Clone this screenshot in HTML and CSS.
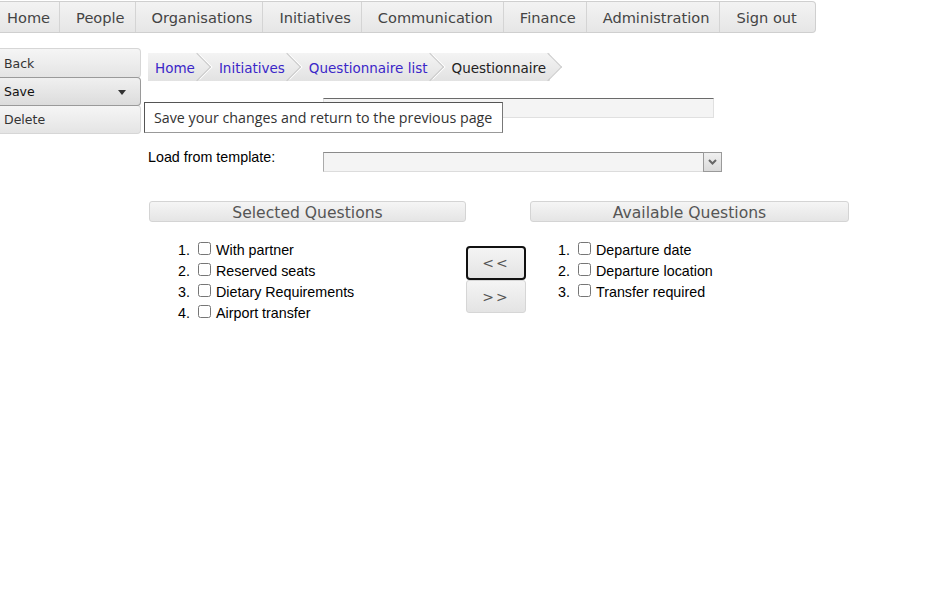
FILE: index.html
```html
<!DOCTYPE html>
<html>
<head>
<meta charset="utf-8">
<link rel="stylesheet" href="styles.css">
</head>
<body>
<nav class="topnav">
  <a class="nav-item first">Home</a>
  <a class="nav-item">People</a>
  <a class="nav-item">Organisations</a>
  <a class="nav-item">Initiatives</a>
  <a class="nav-item">Communication</a>
  <a class="nav-item">Finance</a>
  <a class="nav-item">Administration</a>
  <a class="nav-item last">Sign out</a>
</nav>
<div class="main">
  <aside class="sidemenu">
    <div class="side-btn first">Back</div>
    <div class="side-btn active">Save <span class="caret"></span></div>
    <div class="side-btn">Delete</div>
    <div class="tooltip">Save your changes and return to the previous page</div>
  </aside>
  <section class="content">
    <ul class="crumbs">
      <li class="crumb"><a class="crumb-text">Home</a></li>
      <li class="crumb"><a class="crumb-text">Initiatives</a></li>
      <li class="crumb"><a class="crumb-text">Questionnaire list</a></li>
      <li class="crumb current"><span class="crumb-text">Questionnaire</span></li>
    </ul>
    <div class="form">
      <div class="form-row">
        <div class="form-label"></div>
        <div class="text-input"></div>
      </div>
      <div class="form-row second">
        <label class="form-label">Load from template:</label>
        <div class="select-input"><span class="select-btn"><svg width="9" height="6" viewBox="0 0 9 6"><path d="M1 1 L4.5 4.5 L8 1" fill="none" stroke="#666" stroke-width="2"/></svg></span></div>
      </div>
    </div>
    <div class="questions">
      <div class="panel">
        <div class="panel-head">Selected Questions</div>
        <div class="qlist">
          <div class="qrow"><span class="num">1.</span><input type="checkbox" class="cb"><span class="qtext">With partner</span></div>
          <div class="qrow"><span class="num">2.</span><input type="checkbox" class="cb"><span class="qtext">Reserved seats</span></div>
          <div class="qrow"><span class="num">3.</span><input type="checkbox" class="cb"><span class="qtext">Dietary Requirements</span></div>
          <div class="qrow"><span class="num">4.</span><input type="checkbox" class="cb"><span class="qtext">Airport transfer</span></div>
        </div>
      </div>
      <div class="movers">
        <div class="mover focused">&lt;&lt;</div>
        <div class="mover">&gt;&gt;</div>
      </div>
      <div class="panel right">
        <div class="panel-head">Available Questions</div>
        <div class="qlist">
          <div class="qrow"><span class="num">1.</span><input type="checkbox" class="cb"><span class="qtext">Departure date</span></div>
          <div class="qrow"><span class="num">2.</span><input type="checkbox" class="cb"><span class="qtext">Departure location</span></div>
          <div class="qrow"><span class="num">3.</span><input type="checkbox" class="cb"><span class="qtext">Transfer required</span></div>
        </div>
      </div>
    </div>
  </section>
</div>
</body>
</html>
```
FILE: styles.css
```css
html, body {
  margin: 0;
  padding: 0;
  background: #fff;
}
body {
  font-family: "DejaVu Sans", Verdana, sans-serif;
  color: #000;
}
.topnav {
  display: flex;
  width: max-content;
  margin-top: 1px;
  height: 30px;
  border: 1px solid #cfcfcf;
  border-left: none;
  border-radius: 0 4px 4px 0;
  background: linear-gradient(#f3f3f3, #e6e6e6);
}
.nav-item {
  display: flex;
  align-items: center;
  padding: 0 10px 0 16px;
  font-size: 14.6px;
  color: #444;
  border-left: 1px solid #d4d4d4;
}
.nav-item.first {
  border-left: none;
  padding-left: 7px;
  padding-right: 9px;
}
.nav-item.last {
  padding-right: 18px;
}
.main {
  display: flex;
  align-items: flex-start;
  margin-top: 15px;
}
.sidemenu {
  position: relative;
  width: 141px;
  flex: none;
  display: flex;
  flex-direction: column;
}
.side-btn {
  position: relative;
  height: 27px;
  display: flex;
  align-items: center;
  padding-left: 4px;
  font-size: 12.5px;
  color: #333;
  border: 1px solid #d6d6d6;
  border-left: none;
  border-radius: 0 4px 4px 0;
  background: linear-gradient(#f5f5f5 0%, #ededed 50%, #e4e4e4 100%);
  margin-top: -1px;
}
.side-btn.first {
  margin-top: 0;
  height: 28px;
}
.side-btn.active {
  border-color: #9a9a9a;
  color: #111;
  background: linear-gradient(#f0f0f0 0%, #e6e6e6 50%, #dcdcdc 100%);
  z-index: 1;
}
.caret {
  position: absolute;
  right: 14px;
  top: 12px;
  width: 0;
  height: 0;
  border-left: 4.5px solid transparent;
  border-right: 4.5px solid transparent;
  border-top: 5px solid #333;
}
.tooltip {
  position: absolute;
  left: 144px;
  top: 54px;
  z-index: 5;
  height: 29px;
  padding: 0 10px 0 9px;
  display: flex;
  align-items: center;
  background: #fff;
  border: 1px solid #555;
  border-right-color: #777;
  border-bottom-color: #999;
  font-family: "Open Sans", "Noto Sans", sans-serif;
  font-size: 14.25px;
  color: #333;
  white-space: nowrap;
}
.content {
  margin-left: 7px;
  flex: 1;
}
.crumbs {
  list-style: none;
  margin: 5px 0 0 0;
  padding: 0;
  display: flex;
  width: max-content;
  height: 28px;
  background: linear-gradient(#f4f4f4, #e2e2e2);
}
.crumb {
  position: relative;
  display: flex;
  align-items: center;
  font-size: 13.5px;
  padding: 1px 4px 0 20px;
}
.crumb:first-child {
  padding-left: 7px;
}
.crumb-text {
  position: relative;
  z-index: 2;
}
.crumb a {
  color: #3b27c8;
}
.crumb.current {
  color: #222;
}
.crumb::after {
  content: "";
  position: absolute;
  right: -8px;
  top: 4px;
  width: 19px;
  height: 19px;
  transform: rotate(45deg);
  border-top: 1px solid #c9c9c9;
  border-right: 1px solid #c9c9c9;
  box-shadow: 2px -2px 0 -1px #fff;
  background: linear-gradient(135deg, #f4f4f4, #e2e2e2);
  z-index: 1;
}
.form {
  margin-top: 17px;
  font-family: "Liberation Sans", Arial, sans-serif;
  font-size: 14.3px;
}
.form-row {
  display: flex;
  align-items: flex-start;
}
.form-row.second {
  margin-top: 34px;
}
.form-label {
  width: 175px;
  flex: none;
  line-height: 10px;
}
.text-input {
  width: 389px;
  height: 18px;
  background: #f4f4f4;
  border: 1px solid #e0e0e0;
  border-top-color: #6a6a6a;
}
.select-input {
  position: relative;
  width: 397px;
  height: 18px;
  background: #f4f4f4;
  border: 1px solid #dcdcdc;
  border-top-color: #8a8a8a;
  border-left-color: #aaa;
}
.select-btn {
  position: absolute;
  right: -1px;
  top: -1px;
  width: 17px;
  height: 18px;
  border: 1px solid #9a9a9a;
  background: linear-gradient(#f0f0f0, #dadada);
  display: flex;
  align-items: center;
  justify-content: center;
}
.questions {
  display: flex;
  align-items: flex-start;
  margin-top: 29px;
  font-family: "Liberation Sans", Arial, sans-serif;
}
.panel {
  width: 317px;
  margin-left: 1px;
}
.panel.right {
  width: 319px;
  margin-left: 4px;
}
.panel-head {
  height: 19px;
  border: 1px solid #d4d4d4;
  border-radius: 3px;
  background: linear-gradient(#f5f5f5, #e5e5e5);
  font-family: "DejaVu Sans", Verdana, sans-serif;
  font-size: 15.6px;
  color: #555;
  text-align: center;
  line-height: 22px;
}
.qlist {
  margin-top: 17px;
}
.qrow {
  display: flex;
  align-items: center;
  height: 21px;
  font-size: 14.3px;
}
.num {
  width: 41px;
  text-align: right;
  flex: none;
}
.panel.right .num {
  width: 40px;
}
.cb {
  width: 13px;
  height: 13px;
  margin: 0 5px 0 8px;
  position: relative;
  top: -1px;
}
.movers {
  width: 60px;
  margin-top: 45px;
  display: flex;
  flex-direction: column;
}
.mover {
  height: 31px;
  border: 1px solid #d6d6d6;
  border-radius: 3px;
  background: linear-gradient(#f4f4f4, #e4e4e4);
  display: flex;
  align-items: center;
  justify-content: center;
  font-family: "DejaVu Sans", Verdana, sans-serif;
  font-size: 14px;
  color: #555;
  letter-spacing: 2px;
}
.mover.focused {
  height: 30px;
  border: 2px solid #111;
  border-radius: 4px;
}
```
